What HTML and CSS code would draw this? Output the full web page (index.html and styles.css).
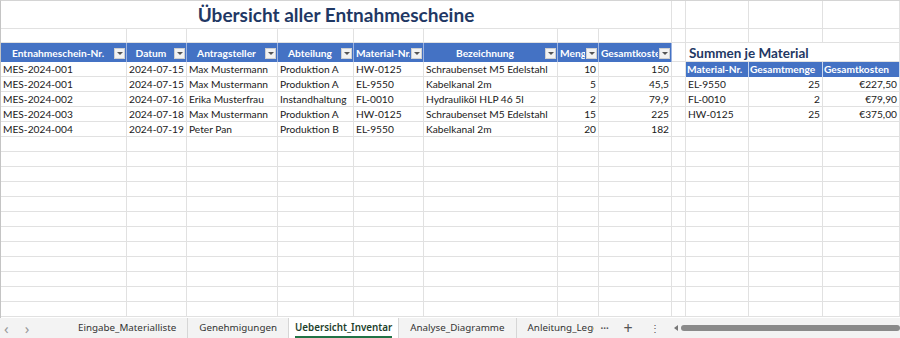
FILE: index.html
```html
<!DOCTYPE html>
<html lang="de">
<head>
    <meta charset="UTF-8">
    <meta name="viewport" content="width=device-width, initial-scale=1.0">
    <title>Uebersicht_Inventar</title>
    <link rel="stylesheet" href="styles.css">
</head>
<body>
    <div class="sheet" id="sheet">
        <div class="row row-title">
            <div class="cell title">Übersicht aller Entnahmescheine</div>
            <div class="cell"></div><div class="cell"></div><div class="cell"></div><div class="cell"></div>
        </div>
        <div class="row row-gap">
            <div class="cell"></div><div class="cell"></div><div class="cell"></div><div class="cell"></div>
            <div class="cell"></div><div class="cell"></div><div class="cell"></div><div class="cell"></div>
            <div class="cell"></div><div class="cell"></div><div class="cell"></div><div class="cell"></div>
        </div>
        <div class="row row-head">
            <div class="cell th"><span class="th-text">Entnahmeschein-Nr.</span><span class="filter"></span></div>
            <div class="cell th"><span class="th-text">Datum</span><span class="filter"></span></div>
            <div class="cell th"><span class="th-text">Antragsteller</span><span class="filter"></span></div>
            <div class="cell th"><span class="th-text">Abteilung</span><span class="filter"></span></div>
            <div class="cell th"><span class="th-text">Material-Nr.</span><span class="filter"></span></div>
            <div class="cell th"><span class="th-text">Bezeichnung</span><span class="filter"></span></div>
            <div class="cell th"><span class="th-text">Menge</span><span class="filter"></span></div>
            <div class="cell th"><span class="th-text">Gesamtkosten</span><span class="filter"></span></div>
            <div class="cell"></div>
            <div class="cell sum-title">Summen je Material</div>
        </div>
        <div class="row">
            <div class="cell">MES-2024-001</div><div class="cell">2024-07-15</div><div class="cell">Max Mustermann</div><div class="cell">Produktion A</div>
            <div class="cell">HW-0125</div><div class="cell">Schraubenset M5 Edelstahl</div><div class="cell num">10</div><div class="cell num">150</div>
            <div class="cell"></div>
            <div class="cell sh">Material-Nr.</div><div class="cell sh">Gesamtmenge</div><div class="cell sh">Gesamtkosten</div>
        </div>
        <div class="row">
            <div class="cell">MES-2024-001</div><div class="cell">2024-07-15</div><div class="cell">Max Mustermann</div><div class="cell">Produktion A</div>
            <div class="cell">EL-9550</div><div class="cell">Kabelkanal 2m</div><div class="cell num">5</div><div class="cell num">45,5</div>
            <div class="cell"></div>
            <div class="cell">EL-9550</div><div class="cell num">25</div><div class="cell num">€227,50</div>
        </div>
        <div class="row">
            <div class="cell">MES-2024-002</div><div class="cell">2024-07-16</div><div class="cell">Erika Musterfrau</div><div class="cell">Instandhaltung</div>
            <div class="cell">FL-0010</div><div class="cell">Hydrauliköl HLP 46 5l</div><div class="cell num">2</div><div class="cell num">79,9</div>
            <div class="cell"></div>
            <div class="cell">FL-0010</div><div class="cell num">2</div><div class="cell num">€79,90</div>
        </div>
        <div class="row">
            <div class="cell">MES-2024-003</div><div class="cell">2024-07-18</div><div class="cell">Max Mustermann</div><div class="cell">Produktion A</div>
            <div class="cell">HW-0125</div><div class="cell">Schraubenset M5 Edelstahl</div><div class="cell num">15</div><div class="cell num">225</div>
            <div class="cell"></div>
            <div class="cell">HW-0125</div><div class="cell num">25</div><div class="cell num">€375,00</div>
        </div>
        <div class="row">
            <div class="cell">MES-2024-004</div><div class="cell">2024-07-19</div><div class="cell">Peter Pan</div><div class="cell">Produktion B</div>
            <div class="cell">EL-9550</div><div class="cell">Kabelkanal 2m</div><div class="cell num">20</div><div class="cell num">182</div>
            <div class="cell"></div>
            <div class="cell"></div><div class="cell"></div><div class="cell"></div>
        </div>
    </div>

    <div class="tabbar">
        <div class="nav">
            <span class="arrow">&lsaquo;</span>
            <span class="arrow">&rsaquo;</span>
        </div>
        <div class="tab">Eingabe_Materialliste</div>
        <div class="tab">Genehmigungen</div>
        <div class="tab active"><span>Uebersicht_Inventar</span></div>
        <div class="tab">Analyse_Diagramme</div>
        <div class="tab last">Anleitung_Legende</div>
        <span class="more">&middot;&middot;&middot;</span>
        <span class="plus">+</span>
        <span class="dots">&#8942;</span>
        <div class="scroll">
            <span class="scroll-arrow"></span>
            <span class="thumb"></span>
        </div>
    </div>

    <script>
        // fill the rest of the sheet with empty rows
        const sheet = document.getElementById("sheet");
        for (let r = 0; r < 12; r++) {
            const row = document.createElement("div");
            row.className = "row";
            for (let c = 0; c < 12; c++) {
                const cell = document.createElement("div");
                cell.className = "cell";
                row.appendChild(cell);
            }
            sheet.appendChild(row);
        }
    </script>
</body>
</html>
```

FILE: styles.css
```css
body {
    margin: 0;
    background-color: #fff;
    font-family: Lato, "Open Sans", sans-serif;
    color: #1a1a1a;
}
.sheet {
    height: 317px;
    overflow: hidden;
    border-top: 1px solid #d4d4d4;
    border-left: 1px solid #c4c4c4;
}
.row {
    display: grid;
    grid-template-columns: 126px 60px 91px 76px 70px 134px 41px 73px 14px 63px 74px 77px;
    height: 15px;
}
.row-title {
    height: 28px;
}
.row-gap {
    height: 14px;
}
.row-head {
    height: 19px;
}
.cell {
    box-sizing: border-box;
    border-right: 1px solid #e1e1e1;
    border-bottom: 1px solid #e1e1e1;
    padding: 0 2px;
    font-size: 10.2px;
    line-height: 14px;
    white-space: nowrap;
    overflow: hidden;
}
.num {
    text-align: right;
}
.title {
    grid-column: span 8;
    text-align: center;
    font-size: 19px;
    font-weight: bold;
    line-height: 28px;
    color: #1f3864;
}
.th {
    display: flex;
    align-items: flex-end;
    background-color: #4472c4;
    border-right: 1px solid #9db3e0;
    border-bottom: none;
    color: #fff;
    font-weight: bold;
    padding: 0 1px 1px 2px;
}
.th-text {
    flex: 1;
    min-width: 0;
    text-align: center;
    overflow: hidden;
    line-height: 16px;
}
.filter {
    flex: none;
    width: 11px;
    height: 11px;
    margin: 0 0 2px 1px;
    box-sizing: border-box;
    background-color: #f2f2f2;
    border: 1px solid #d0d0d0;
    display: flex;
    align-items: center;
    justify-content: center;
}
.filter::after {
    content: "";
    border-left: 3px solid transparent;
    border-right: 3px solid transparent;
    border-top: 3px solid #555;
}
.sum-title {
    grid-column: span 3;
    font-size: 13.5px;
    font-weight: bold;
    color: #1f3864;
    line-height: 20px;
    padding-left: 3px;
}
.sh {
    background-color: #4472c4;
    color: #fff;
    font-weight: bold;
    border-right: 1px solid #c9d6ee;
    border-bottom: none;
    padding: 0 1px;
}
.tabbar {
    display: flex;
    align-items: center;
    height: 20px;
    background-color: #f3f3f3;
    font-family: "Noto Sans", "Open Sans", sans-serif;
    font-size: 9.8px;
    color: #333;
    overflow: hidden;
}
.nav {
    width: 67px;
    flex: none;
    display: flex;
    gap: 16px;
    padding-left: 4px;
    box-sizing: border-box;
}
.arrow {
    color: #9a9a9a;
    font-size: 15px;
    line-height: 20px;
}
.tab {
    height: 20px;
    line-height: 20px;
    padding: 0 11px;
    border-right: 1px solid #d6d6d6;
    flex: none;
}
.tab.active {
    background-color: #fff;
    font-weight: 600;
    color: #1d3f2c;
    padding: 0 6px;
}
.tab.active span {
    display: inline-block;
    line-height: 16px;
    border-bottom: 2px solid #217346;
}
.tab.last {
    width: 66px;
    overflow: hidden;
    border-right: none;
    padding-right: 0;
}
.more {
    width: 12px;
    margin-left: 7px;
    font-weight: bold;
    color: #555;
    flex: none;
}
.plus {
    margin-left: 11px;
    font-size: 16px;
    color: #555;
    flex: none;
}
.dots {
    margin-left: 17px;
    color: #555;
    flex: none;
}
.scroll {
    flex: 1;
    display: flex;
    align-items: center;
    margin-left: 14px;
}
.scroll-arrow {
    border-top: 3px solid transparent;
    border-bottom: 3px solid transparent;
    border-right: 4px solid #777;
    margin-right: 3px;
}
.thumb {
    flex: 1;
    height: 6px;
    border-radius: 3px;
    background-color: #8a8a8a;
}
```
